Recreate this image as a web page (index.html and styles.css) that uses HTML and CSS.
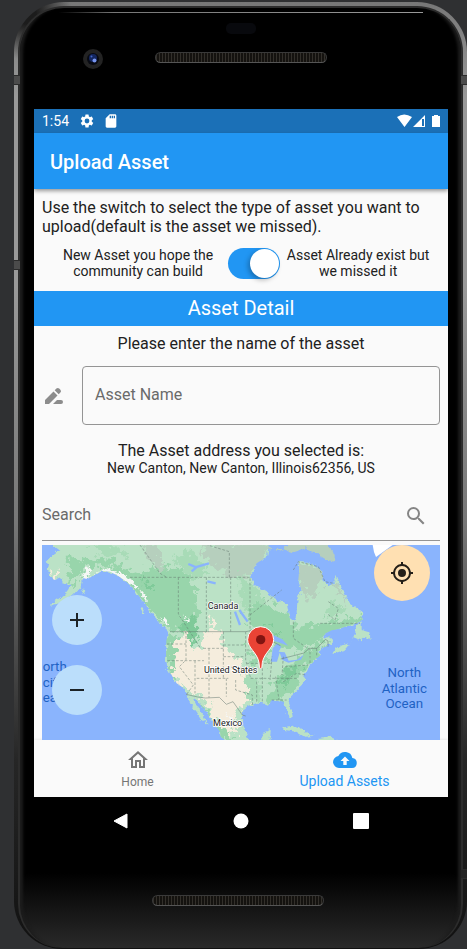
FILE: index.html
```html
<!DOCTYPE html>
<html lang="en">
<head>
<meta charset="utf-8">
<meta name="viewport" content="width=device-width, initial-scale=1">
<title>Upload Asset</title>
<link rel="stylesheet" href="styles.css">
</head>
<body>
<div class="device">
<i class="notch notch-left"></i><i class="notch notch-left notch-low"></i><i class="notch notch-right"></i><i class="notch notch-right notch-bottom"></i>
<div class="glass">
  <div class="bezel-top">
    <span class="shine"></span>
    <span class="sensor"></span>
    <div class="hardware">
      <svg class="camera" viewBox="0 0 20 20" aria-hidden="true"><circle cx="10" cy="10" r="10" fill="#232323"/><circle cx="10" cy="10" r="6" fill="#080a12"/><circle cx="10" cy="9" r="4" fill="#14265e"/><circle cx="11.500" cy="11.500" r="2" fill="#7795f0"/><circle cx="8.500" cy="7.500" r="1" fill="#4164c9"/></svg>
      <span class="speaker"></span>
    </div>
  </div>

  <div class="screen">
    <div class="status">
      <span class="clock">1:54</span>
      <svg class="ic16" viewBox="0 0 24 24"><path fill="#fff" d="M19.140 12.940c.04-.3.06-.61.06-.94s-.02-.64-.07-.94l2.030-1.580a.49.49 0 0 0 .12-.61l-1.920-3.320a.49.49 0 0 0-.59-.22l-2.390.96a7 7 0 0 0-1.620-.94l-.36-2.540a.48.48 0 0 0-.48-.41h-3.840a.48.48 0 0 0-.47.41l-.36 2.540c-.59.24-1.130.57-1.620.94l-2.390-.96a.48.48 0 0 0-.59.22L2.740 8.870a.47.47 0 0 0 .12.61l2.030 1.580a7 7 0 0 0 0 1.880l-2.030 1.580a.49.49 0 0 0-.12.61l1.920 3.320c.12.22.37.29.59.22l2.390-.96c.5.38 1.030.7 1.620.94l.36 2.540c.05.24.24.41.48.41h3.840c.24 0 .44-.17.47-.41l.36-2.540a7 7 0 0 0 1.620-.94l2.390.96c.22.08.47 0 .59-.22l1.920-3.320a.47.47 0 0 0-.12-.61zM12 15.600a3.600 3.600 0 1 1 0-7.200 3.600 3.600 0 0 1 0 7.200z"/></svg>
      <svg class="ic16" viewBox="0 0 24 24"><path fill="#fff" d="M18 2h-8L4 8v12c0 1.100.9 2 2 2h12c1.100 0 2-.9 2-2V4c0-1.100-.9-2-2-2zm-6 6h-2V4h2zm3 0h-2V4h2zm3 0h-2V4h2z"/></svg>
      <svg class="radios" viewBox="0 0 44 14"><path fill="#fff" d="M0 3Q7-2 15 3L7.500 13zM28 1v12H16z"/><path fill="#1b70b7" d="M25 5h2v7h-2z"/><path fill="#fff" d="M37 1h4v1h2v11h-8V2h2z"/></svg>
    </div>
    <header class="appbar"><h1>Upload Asset</h1></header>

    <main>
      <p class="intro">Use the switch to select the type of asset you want to upload(default is the asset we missed).</p>
      <div class="switch-row">
        <label class="kind-new" for="kind">New Asset you hope the community can build</label>
        <input id="kind" class="switch" type="checkbox" role="switch" checked>
        <label class="kind-missed" for="kind">Asset Already exist but we missed it</label>
      </div>
      <h2>Asset Detail</h2>
      <label class="lead" for="name">Please enter the name of the asset</label>
      <div class="name-row">
        <svg class="ic24" viewBox="0 0 24 24" fill="#8c8c8c"><path d="M3 20v-4l8.500-8.500 4 4L7 20zM12.700 6.300l1.700-1.700a2 2 0 0 1 2.800 0l1.200 1.200a2 2 0 0 1 0 2.800l-1.700 1.700zM11 20l4-4h4a2 2 0 0 1 0 4z"/></svg>
        <input id="name" class="name" type="text" placeholder="Asset Name">
      </div>
      <div class="address"><p class="address-title">The Asset address you selected is:</p><p>New Canton, New Canton, Illinois62356, US</p></div>
      <div class="search">
        <input type="search" placeholder="Search" aria-label="Search">
        <button type="button" aria-label="Search address"><svg class="ic24" viewBox="0 0 24 24"><path fill="#858585" d="M15.500 14h-.79l-.28-.27A6.470 6.470 0 0 0 16 9.500 6.500 6.500 0 1 0 9.500 16c1.610 0 3.090-.59 4.230-1.570l.27.28v.79l5 4.990L20.490 19zm-6 0a4.500 4.500 0 1 1 0-9 4.500 4.500 0 0 1 0 9z"/></svg></button>
      </div>
      <div class="map">
        <svg class="map-art" viewBox="36 15 1194 585">
          <defs>
            <filter id="coast" x="-5%" y="-5%" width="110%" height="110%" color-interpolation-filters="sRGB"><feTurbulence type="fractalNoise" baseFrequency=".08" numOctaves="3" seed="4"/><feDisplacementMap in="SourceGraphic" scale="16" xChannelSelector="R" yChannelSelector="G"/></filter>
            <filter id="rough" x="-10%" y="-10%" width="120%" height="120%" color-interpolation-filters="sRGB"><feTurbulence type="fractalNoise" baseFrequency=".05" numOctaves="4" seed="9"/><feDisplacementMap in="SourceGraphic" scale="60" xChannelSelector="R" yChannelSelector="G"/></filter>
            <filter id="fine" x="-10%" y="-10%" width="120%" height="120%" color-interpolation-filters="sRGB"><feTurbulence type="fractalNoise" baseFrequency=".09" numOctaves="3" seed="2"/><feDisplacementMap in="SourceGraphic" scale="24" xChannelSelector="R" yChannelSelector="G"/></filter>
            <path id="land" d="M60 10L88 30 68 45 50 62 60 78 50 88 58 102 72 120 92 112 98 126 125 135 104 163 76 184 58 198 92 188 128 166 154 138 160 114 172 118 195 104 215 92 240 95 265 108 290 126 310 145 325 165 345 190 360 215 378 235 394 254 412 270 416 288 409 300 408 360 412 385 425 405 440 430 464 446 470 463 480 490 500 515 515 540 533 554 522 528 506 508 490 478 498 476 515 500 540 530 556 555 570 575 572 590 600 610H662L648 580 637 560 636 530 641 507 655 497 680 488 700 490 715 496 725 480 745 480 763 487 766 502 780 535 788 530 784 505 775 481 782 470 805 447 822 426 824 405 830 386 855 361 871 346 862 335 878 323 905 311 906 297 900 288 874 294 888 280 915 270 940 262 975 252 998 240 996 215 960 190 941 160 926 121 919 105 910 130 896 138 880 120 877 95 855 76 830 68 806 66 808 88 805 120 815 150 803 175 800 215 793 245 779 235 770 190 745 182 715 160 675 135 660 115 665 95 680 70 710 50 715 30 710 10z"/>
            <clipPath id="on-land"><use href="#land"/></clipPath>
          </defs>
          <path fill="#8ab4fd" d="M0 0h1300v700H0z"/>
          <g filter="url(#coast)">
            <use href="#land" fill="#bbe2c6"/>
            <path fill="#bbe2c6" d="M905 336l28-20 28-6-18 20-28 10zM970 292l14-40 8-5v22l25 8 6 22-18-8-12 10zM758 562l30-5 35 15 28 16-28 2-24-15-35-5zM695 610l4-32 24-7-6 39zM865 594l32-5 30 14h-60zM330 200l14 10-3 14zM150 148l16 2-8 12z"/>
            <path fill="#b6cfbd" d="M700 12l52 24 12-16 15-8h110l20 20 10 35-30-8-36-22-24-12-42 12-28-10-40-1z"/>
          </g>
          <g clip-path="url(#on-land)">
            <g filter="url(#rough)" fill="#98d5ab">
              <path d="M270 80l60 20 60-20 70 10 40 60 5 90-10 60-30 10-15-55-35 15-60-60-55-50-70-55zM120 50l60 10 60-5 30 30-80-10-80 70zM640 220l60-40 50 30 50 50 80-15 110-10 30-5-40 30-80 30-60 25-40 15-60-5-60-45zM408 290l30-10 10 60-15 90-20-20zM735 425l50-55 80-65 25 20-70 60-20 55-65 55-30-5zM650 310l60 15 10 40-50 10zM510 490l60 60 40 50h-40z"/>
              <path fill="#a8dbb7" d="M180 12l90 8 30 30-100-10zM430 60l50-30 60 70-50 20zM650 410l50 10-20 65-40 10zM620 90l90 90-70 30zM900 180l50 30-60 20z"/>
              <path fill="#7fca99" d="M450 250l50-20 2 60-20 25zM320 110l50 30-10 20zM750 425l40-50 20 5-50 60zM700 260l60 30-40 5z"/>
              <path fill="#b6cfbd" d="M330 10l50 0 20 80-12 8-35-45zM530 10h190l-30 75-35 25-60-4-55-35-30-40zM805 64l65 20 10 50-40 40-35-30zM905 105l35 60 15 30-40-50z"/>
            </g>
            <g filter="url(#rough)">
              <path fill="#f5eddd" d="M438 290l30-8 20 40 20 5 20-60 50 10 3 45 50 40 20 55-5 45 15 25-55 35 25 50-40 10-40-50-35-65-46-14-45-55z"/>
              <path fill="#f5eddd" d="M535 235l25 15-20 15zM55 90l30 12-15 15z"/>
            </g>
            <path filter="url(#fine)" fill="#f5f7f5" d="M155 120l15-38 12 2-5 28zM196 99l24-14 42 12 42 20 18 28-44-22-45-12zM325 143l28 32-5 10zM390 233l30 18-12 5zM458 225l22 20-8 3zM585 520l18 10-4 8z"/>
            <path fill="none" stroke="#8ab4fd" stroke-width="7" d="M475 72l24 10-14 12m10-12l42-12M532 124l25 6M615 215l15 40M628 210l25 35"/>
          </g>
          <g fill="#8ab4fd"><path d="M723 365l5-40 14-15 12 10-8 15 18 2 12 25 25-3 20-15-8 15-38 9-18-8-8-22-8 27zM727 284l30 14 17 19-25-9-18-6zM885 281l20-10 32-5-20 15-28 11z"/></g>
          <g fill="none" stroke="#62766e" stroke-width="2" opacity=".75">
            <path d="M420 275H647l16-3 29 6 19 18 40 21M752 357l70-18 16-14h23l25-27 8 5v17M468 463l35 8 23 3 42-2 21 21 20-8 28 40 10 3"/>
            <g stroke-dasharray="8 5"><path d="M300 112H660M330 15l60 85 20 12M445 112v110l65 100M529 112v163M602 112v163M598 112V35l-65-20M660 115v160M660 225l95-75M412 362h110M468 275v85l-20 20 42 55-20 28M495 362v98M537 325v148M410 312h58M520 325h60M580 275v140M580 315h67M580 350h67M500 415h95M589 415v55M647 275v85l15 55M590 382h70M617 420v30l50 15v35M650 370h72l4-20M662 415h138M680 425v60M697 385v100M725 365l-5 55M737 410l10 70M760 350l-4 55M725 480h45M650 330h30M790 245v50l50 35M790 90l15-25 60 15 20 45 25 5M895 185l30 20-10 35-25-20M870 250h120M760 425l40-25 27 5M765 380l70-5M840 335v35M860 325v25"/></g>
          </g>
          <g class="place"><text x="579" y="207" text-anchor="middle">Canada</text><text x="602" y="398" text-anchor="middle">United States</text><text x="593" y="559" text-anchor="middle">Mexico</text></g>
          <g class="ocean"><text x="38" y="393">orth</text><text x="38" y="440">cific</text><text x="38" y="487">ean</text><text x="1123" y="411" text-anchor="middle">North</text><text x="1123" y="458" text-anchor="middle">Atlantic</text><text x="1123" y="505" text-anchor="middle">Ocean</text></g>
          <path fill="#fff" d="M1028 15h60l-50 36-6-15z"/>
          <path fill="#ea4335" stroke="#fff" stroke-width="3" d="M692 386c-4 0-4-8-5-18-5-30-34-44-34-69a39 39 0 0 1 78 0c0 25-29 39-34 69-1 10-1 18-5 18z"/><circle cx="692" cy="299" r="14" fill="#811411"/>
        </svg>
        <button class="round zoom-in" type="button" aria-label="Zoom in"><svg class="ic24" viewBox="0 0 24 24"><path fill="#1c2226" d="M19 13h-6v6h-2v-6H5v-2h6V5h2v6h6z"/></svg></button>
        <button class="round zoom-out" type="button" aria-label="Zoom out"><svg class="ic24" viewBox="0 0 24 24"><path fill="#1c2226" d="M5 11h14v2H5z"/></svg></button>
        <button class="round locate" type="button" aria-label="My location"><svg class="ic24" viewBox="0 0 24 24"><path fill="#241f18" d="M12 8a4 4 0 1 0 0 8 4 4 0 0 0 0-8zm8.940 3A9 9 0 0 0 13 3.060V1h-2v2.060A9 9 0 0 0 3.060 11H1v2h2.060A9 9 0 0 0 11 20.940V23h2v-2.060A9 9 0 0 0 20.940 13H23v-2zM12 19a7 7 0 1 1 0-14 7 7 0 0 1 0 14z"/></svg></button>
      </div>
    </main>

    <nav class="tabs">
      <a href="#home"><svg class="ic24" viewBox="0 0 24 24"><path fill="currentColor" d="M12 5.690l5 4.500V18h-2v-6H9v6H7v-7.810zM12 3L2 12h3v8h6v-6h2v6h6v-8h3z"/></svg><span>Home</span></a>
      <a href="#upload" class="active"><svg class="ic24" viewBox="0 0 24 24"><path fill="currentColor" d="M19.350 10.040A7.490 7.490 0 0 0 5.350 8.040 6 6 0 0 0 6 20h13a5 5 0 0 0 .35-9.960zM13.700 13v4h-3.400v-4H7.500L12 8.500l4.500 4.500z"/></svg><span>Upload Assets</span></a>
    </nav>
  </div>

  <div class="sysbar">
    <button type="button" aria-label="Back"><svg class="ic16" viewBox="0 0 16 16"><path fill="#fff" stroke="#fff" stroke-linejoin="round" d="M1 8l13-7v14z"/></svg></button>
    <button type="button" aria-label="Home screen"><svg class="ic16" viewBox="0 0 16 16"><circle cx="8" cy="8" r="7.500" fill="#fff"/></svg></button>
    <button type="button" aria-label="Recent apps"><svg class="ic16" viewBox="0 0 16 16"><rect width="16" height="16" rx="1" fill="#fff"/></svg></button>
  </div>
  <div class="bezel-bottom"><span class="speaker"></span></div>
</div>
</div>
</body>
</html>
```
FILE: styles.css
```css
* { box-sizing: border-box; }
body {
  margin: 0;
  min-height: 100vh;
  padding: 2px 0 0 14px;
  background: #2f3032;
  font-family: Roboto, sans-serif;
  color: #212121;
}
h1, h2, p { margin: 0; font-weight: 400; }
button { border: 0; padding: 0; background: none; display: grid; place-items: center; }
svg { display: block; }
.ic16 { width: 16px; height: 16px; }
.ic24 { width: 24px; height: 24px; }

.device {
  position: relative;
  min-height: calc(100vh - 2px);
  padding: 4px 4px 1px;
  border-radius: 50px 50px 48px 48px;
  background:
    radial-gradient(circle at 12px 12px, #1c1c1c 10px, transparent 46px),
    linear-gradient(#777, #999 10%, #999 30%, #777 55%, #262626 80%, #111);
  display: flex;
}
.glass {
  flex: 1;
  min-width: 0;
  display: flex;
  flex-direction: column;
  padding: 0 13px 0 14px;
  border: solid #2c2c2c;
  border-width: 2px 2px 0;
  border-radius: 46px 46px 44px 44px;
  background: linear-gradient(transparent 92%, #2a2a2a), #000;
  box-shadow: inset 6px 0 3px -3px #1c1c1c, inset -6px 0 3px -3px #1c1c1c;
}
.notch { position: absolute; top: 73px; width: 6px; height: 10px; background: #4b4b4b; border: solid #2b2b2b; border-width: 1px 0; }
.notch-left { left: 0; }
.notch-right { right: 0; }
.notch-low { top: 258px; }
.notch-bottom { top: auto; bottom: 70px; background: #222; }

.bezel-top { height: 101px; display: flex; flex-direction: column; align-items: center; }
.shine { width: 88%; height: 1px; margin-top: 4px; background: linear-gradient(90deg, transparent, #777 15%, #999); }
.sensor { width: 30px; height: 11px; margin-top: 10px; border-radius: 5px; background: #08090d; }
.hardware { align-self: stretch; display: grid; grid-template-columns: 1fr auto 1fr; align-items: center; margin-top: 15px; }
.camera { width: 20px; height: 20px; margin-left: 49px; }
.speaker {
  width: 172px;
  height: 11px;
  border: 1px solid #3a3a3a;
  border-bottom-color: #555;
  border-radius: 6px;
  background: repeating-linear-gradient(90deg, #33302b 0 1px, #14120f 1px 3px);
}
.hardware .speaker { margin-bottom: 3px; }

.screen { background: #fafafa; }
.status { height: 24px; padding: 0 7px 0 8px; background: #1b70b7; display: flex; align-items: center; gap: 8px; color: #fff; }
.clock { font-size: 14px; margin-right: 2px; }
.radios { width: 44px; height: 14px; margin-left: auto; }
.appbar {
  position: relative;
  height: 56px;
  padding: 2px 16px 0;
  display: flex;
  align-items: center;
  background: #2196f3;
  box-shadow: 0 2px 4px #0006;
  color: #fff;
}
.appbar h1 { font-size: 20px; font-weight: 500; }
.intro { padding: 9px 8px; font-size: 16px; line-height: 19px; }
.switch-row { padding: 2px 12px 12px 14px; display: flex; align-items: center; font-size: 14px; line-height: 16px; text-align: center; }
.kind-new { flex: 10; padding: 0 8px; }
.kind-missed { flex: 9; padding: 0 4px; }
.switch {
  appearance: none;
  flex: none;
  width: 52px;
  height: 31px;
  margin: 0;
  padding: 1px;
  border-radius: 16px;
  background: #2196f3;
  display: flex;
  justify-content: flex-end;
}
.switch::before { content: ""; width: 29px; height: 29px; border-radius: 50%; background: #fff; box-shadow: -2px 2px 5px #0004; }
h2 { background: #2196f3; color: #fff; font-size: 20px; line-height: 35px; text-align: center; }
.lead { display: block; padding: 8px 8px 12px; font-size: 16px; line-height: 20px; text-align: center; }
.name-row { display: flex; align-items: center; gap: 16px; padding: 0 8px; }
.name { flex: 1; min-width: 0; height: 59px; padding: 0 12px 2px; border: 1px solid #949494; border-radius: 4px; background: none; font: 16px Roboto, sans-serif; }
input::placeholder { color: #6a6a6a; opacity: 1; }
.address { padding: 16px 8px 0; text-align: center; font-size: 14px; line-height: 16px; }
.address-title { font-size: 16px; line-height: 19px; }
.search { display: flex; align-items: center; height: 50px; margin: 15px 8px 4px; border-bottom: 1px solid #949494; }
.search input { flex: 1; min-width: 0; padding: 0 0 2px; border: 0; background: none; font: 16px Roboto, sans-serif; }
.search button { width: 48px; height: 48px; }

.map { position: relative; margin: 0 8px; overflow: hidden; }
.map-art { width: 100%; height: auto; }
.place { font-size: 27px; fill: #202020; stroke: #fff; stroke-width: 5px; paint-order: stroke; }
.ocean { font-size: 40px; fill: #1f62c4; }
.round { position: absolute; width: 50px; height: 50px; border-radius: 50%; background: #bbdefb; }
.zoom-in { left: 10px; top: 50px; }
.zoom-out { left: 10px; top: 120px; }
.locate { right: 10px; top: 0; width: 56px; height: 56px; background: #ffe0b2; }

.tabs { display: grid; grid-template-columns: 1fr 1fr; height: 57px; box-shadow: 0 -1px 2px #0001; }
.tabs a { display: flex; flex-direction: column; align-items: center; padding-top: 8px; color: #757575; font-size: 12px; line-height: 20px; text-decoration: none; }
.tabs .active { color: #2196f3; font-size: 14px; line-height: 18px; }
.sysbar { height: 48px; padding: 0 27px; display: grid; grid-template-columns: repeat(3, 1fr); align-items: center; }
.bezel-bottom { flex: 1; display: flex; justify-content: center; padding: 50px 6px 42px 0; }
```
